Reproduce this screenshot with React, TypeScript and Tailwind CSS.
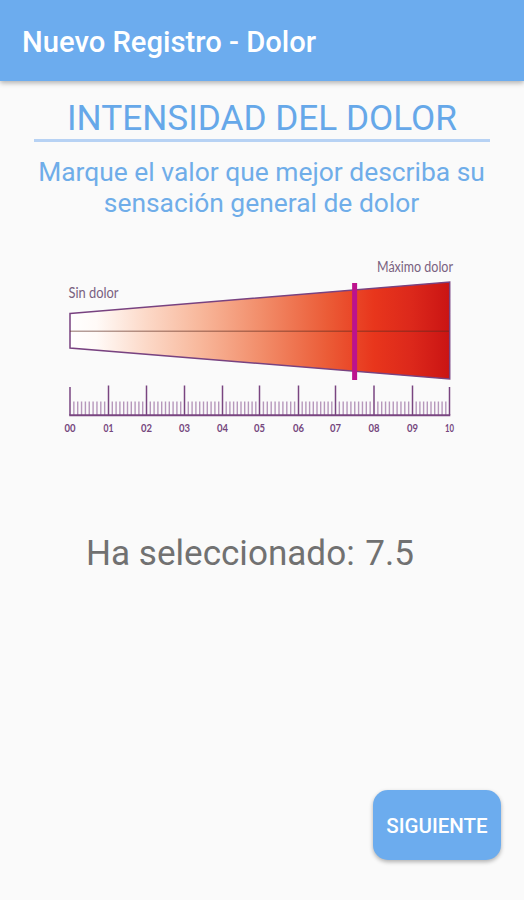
import { useState } from "react";

const TICKS = [70, 108.5, 146.5, 184.5, 222.5, 259.5, 298.5, 335.5, 374, 412.5, 449.5];
const TICK_LABELS = ["00", "01", "02", "03", "04", "05", "06", "07", "08", "09", "10"];

// The nine small marks between each pair of whole values
const MINOR_TICKS = TICKS.slice(0, -1).flatMap((x, i) =>
  Array.from({ length: 9 }, (_, n) => x + ((TICKS[i + 1] - x) * (n + 1)) / 10),
);

interface PainScaleProps {
  value: number;
  onChange: (value: number) => void;
}

function PainScale({ value, onChange }: PainScaleProps) {
  const markerX = 70 + (value / 10) * 379.5;

  const handleClick = (e: React.MouseEvent<SVGSVGElement>) => {
    const rect = e.currentTarget.getBoundingClientRect();
    const raw = ((e.clientX - rect.left - 70) / 379.5) * 10;
    onChange(Math.round(Math.min(10, Math.max(0, raw)) * 10) / 10);
  };

  return (
    <svg
      className="block w-full h-[200px] cursor-pointer font-['Lato',sans-serif]"
      viewBox="0 250 524 200"
      onClick={handleClick}
    >
      <defs>
        <linearGradient id="pain" x1="0" x2="1" y1="0" y2="0">
          <stop offset="0" stopColor="#ffffff" />
          <stop offset="0.07" stopColor="#fffaf7" />
          <stop offset="0.2" stopColor="#fcd9c8" />
          <stop offset="0.34" stopColor="#f8b89c" />
          <stop offset="0.5" stopColor="#f28e6b" />
          <stop offset="0.68" stopColor="#eb5b36" />
          <stop offset="0.8" stopColor="#e8361c" />
          <stop offset="0.9" stopColor="#dc281b" />
          <stop offset="1" stopColor="#ca1413" />
        </linearGradient>
      </defs>

      <text x="68.5" y="297.5" fontSize="15.5" fill="#79617f" textLength="50" lengthAdjust="spacingAndGlyphs">
        Sin dolor
      </text>
      <text x="377" y="271.8" fontSize="15.5" fill="#79617f" textLength="76" lengthAdjust="spacingAndGlyphs">
        Máximo dolor
      </text>

      <path
        d="M70 313.5 L449.7 282 V379 L70 348 Z"
        fill="url(#pain)"
        stroke="#784280"
        strokeWidth="1.5"
      />
      <path d="M70 331.3 H449" stroke="#5a2a20" strokeOpacity="0.45" strokeWidth="1.4" />

      {/* Ruler */}
      {MINOR_TICKS.map((x) => (
        <path key={x} d={`M${x} 401.5 V415`} stroke="#b697bb" strokeWidth="1.4" />
      ))}
      {TICKS.map((x, i) => (
        <path
          key={x}
          d={`M${x} ${i === 0 || i === 10 ? 387 : 385.5} V415`}
          stroke="#794580"
          strokeWidth="1.5"
        />
      ))}
      <path d="M69.2 415.2 H450.3" stroke="#794580" strokeWidth="1.9" />
      {TICK_LABELS.map((label, i) => (
        <text
          key={label}
          x={TICKS[i]}
          y="431.7"
          fontSize="12"
          fontWeight="700"
          fill="#75477d"
          textAnchor="middle"
          textLength={i === 10 ? 9 : i === 1 ? 10 : 11}
          lengthAdjust="spacingAndGlyphs"
        >
          {label}
        </text>
      ))}

      <rect x={markerX - 2.5} y="283" width="5" height="97" fill="#bc138d" />
    </svg>
  );
}

export default function App() {
  const [value, setValue] = useState(7.5);

  return (
    <div className="flex h-[900px] w-full flex-col overflow-hidden bg-[#fafafa] font-['Roboto',sans-serif]">
      <header className="flex h-[81px] shrink-0 items-center bg-[#6cacee] px-[22px] pt-1 shadow-[0_2px_5px_rgba(0,0,0,0.3)]">
        <h1 className="whitespace-nowrap text-[29.2px] font-medium text-white">
          Nuevo Registro - Dolor
        </h1>
      </header>

      <main className="flex flex-1 flex-col">
        <div className="mx-[34px] mt-[15px] flex h-[46px] justify-center border-b-[3px] border-[#b7d2f4]">
          <h2 className="whitespace-nowrap text-[35.2px] leading-[45px] text-[#66a8e9]">
            INTENSIDAD DEL DOLOR
          </h2>
        </div>
        <p className="mt-[15px] h-[93px] whitespace-nowrap pr-px text-center text-[26.4px] leading-[31px] text-[#6fade9]">
          Marque el valor que mejor describa su
          <br />
          sensación general de dolor
        </p>

        <PainScale value={value} onChange={setValue} />

        <p className="mt-[82px] whitespace-nowrap pl-[86px] text-[35.1px] leading-[42px] text-[#717171]">
          Ha seleccionado: <span className="ml-0.5">{value.toFixed(1)}</span>
        </p>

        <div className="mt-auto flex justify-end pb-10 pr-[23px]">
          <button className="h-[70px] w-[128px] rounded-[15px] bg-[#6cacee] pt-0.5 text-[20.5px] font-medium text-white shadow-[0_2px_4px_rgba(0,0,0,0.3)]">
            SIGUIENTE
          </button>
        </div>
      </main>
    </div>
  );
}
